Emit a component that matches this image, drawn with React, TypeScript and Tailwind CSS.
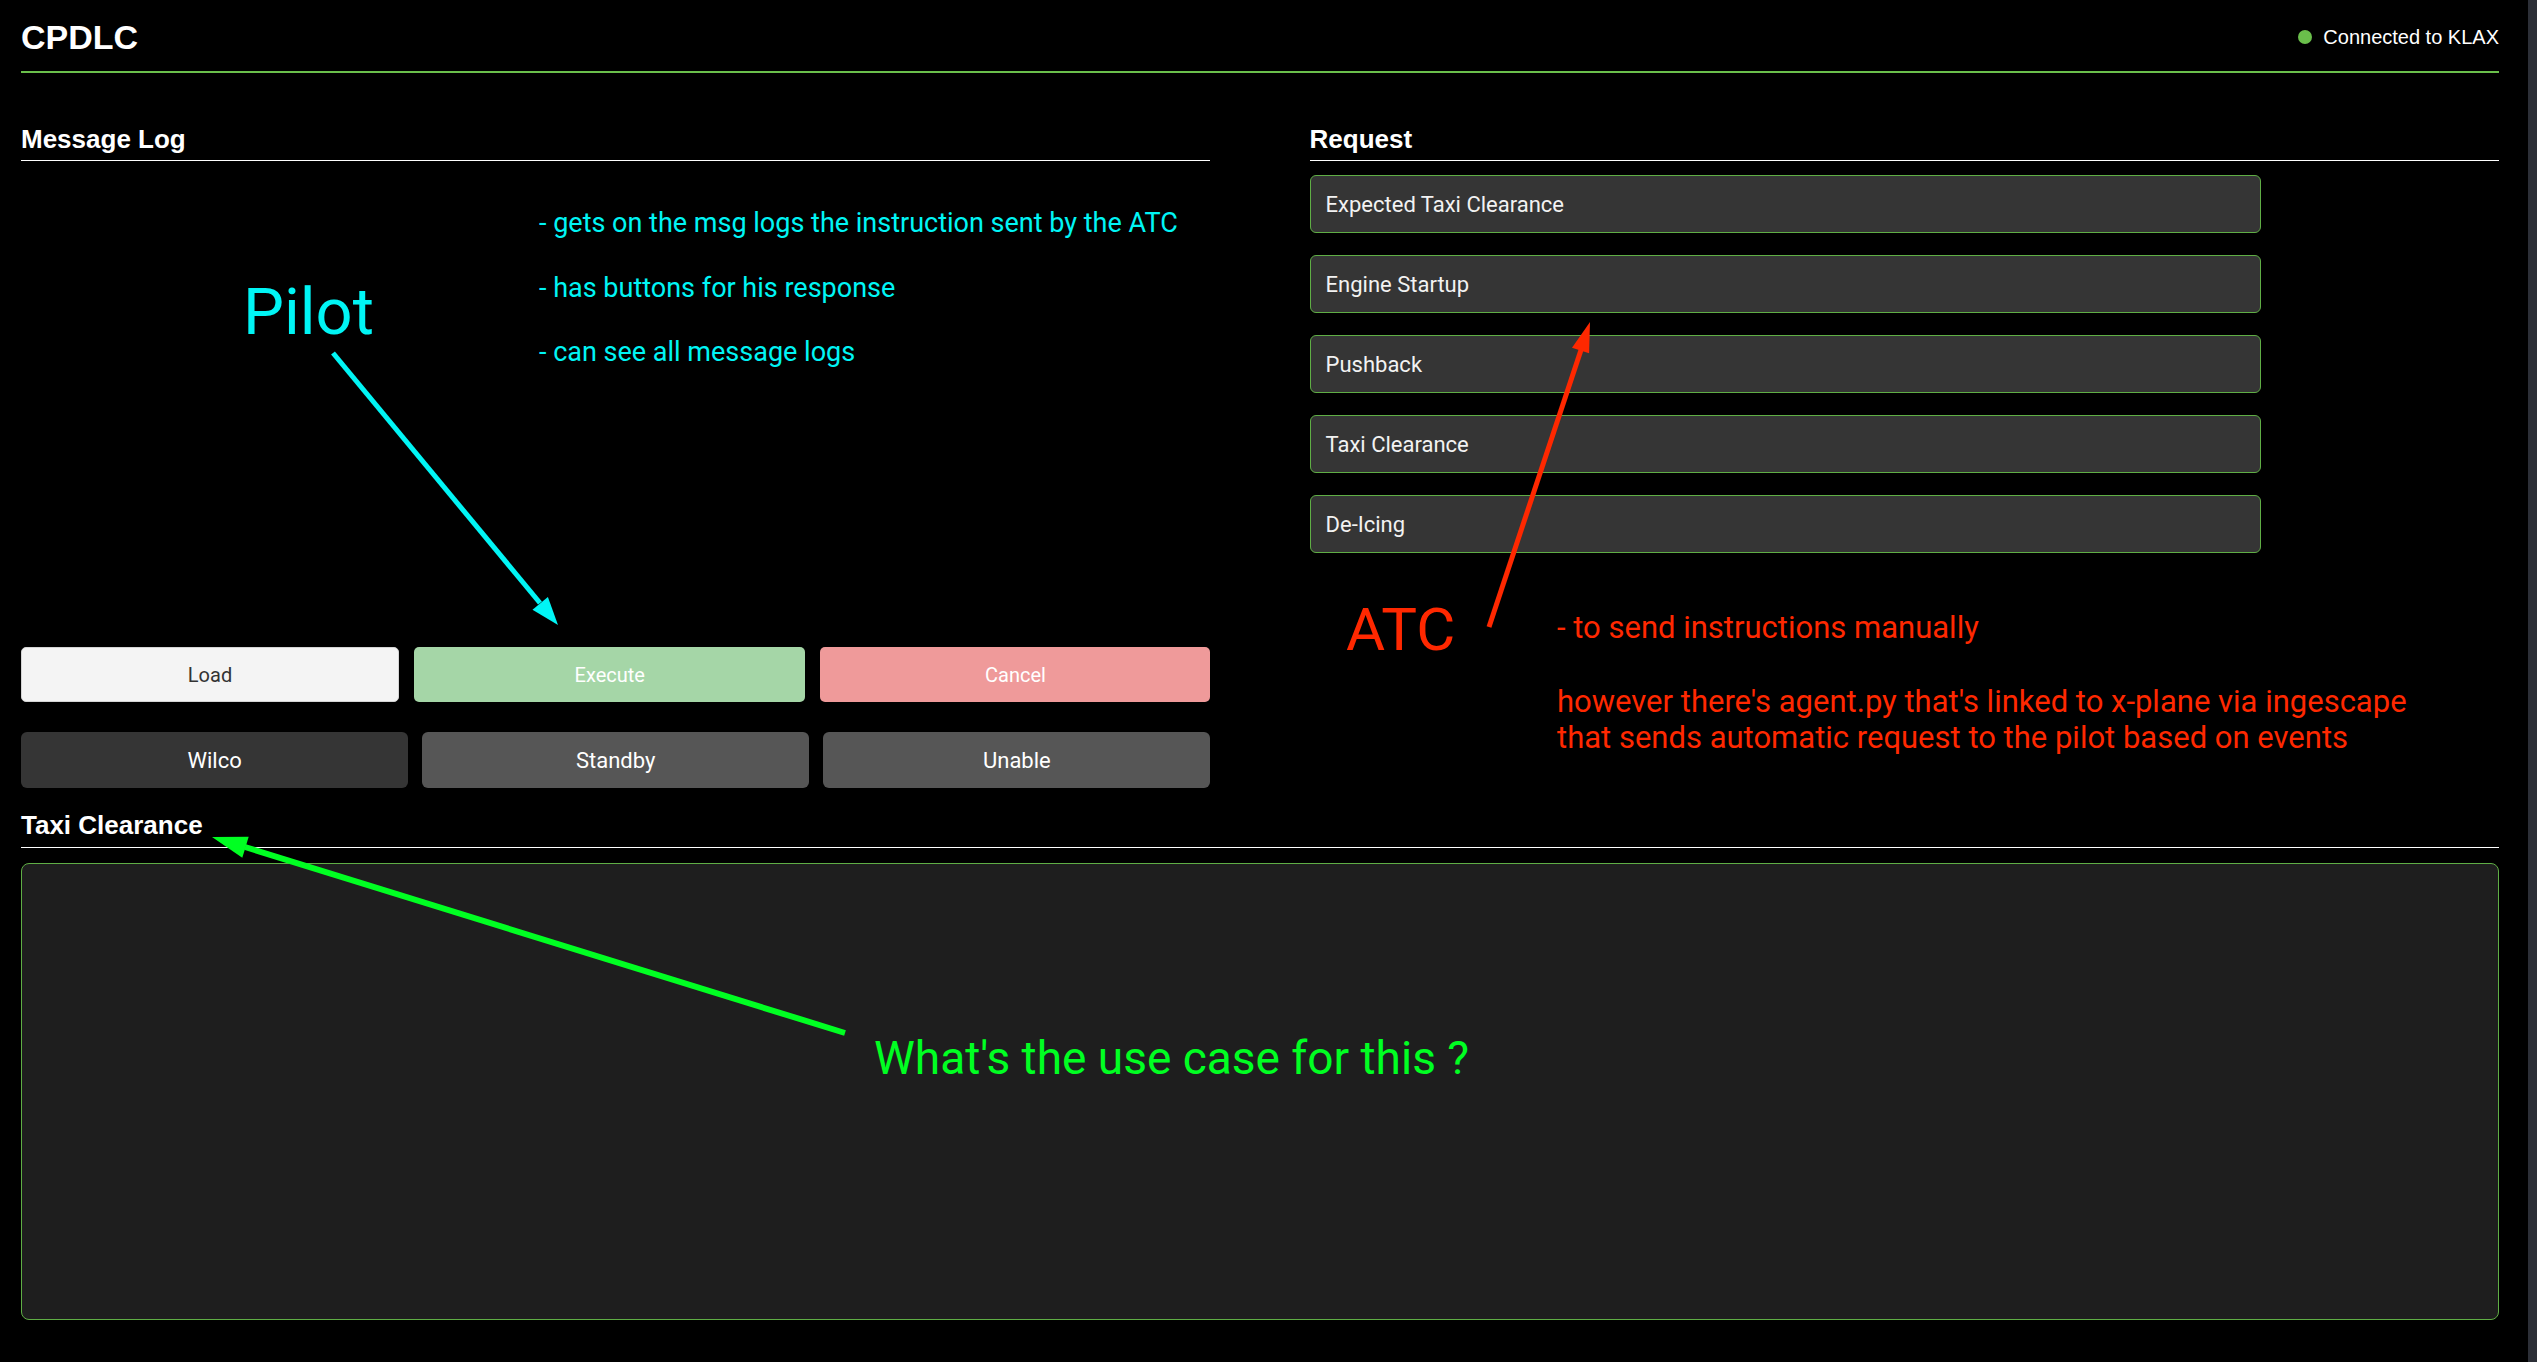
import React from "react";

const requests = [
  "Expected Taxi Clearance",
  "Engine Startup",
  "Pushback",
  "Taxi Clearance",
  "De-Icing",
];

function Annotations() {
  return (
    <div className="pointer-events-none absolute inset-0 font-['Roboto',sans-serif]">
      <svg
        className="absolute left-0 top-0"
        width="2537"
        height="1362"
        viewBox="0 0 2537 1362"
      >
        {/* cyan arrow */}
        <line x1="333" y1="353" x2="540" y2="603" stroke="#00f5f5" strokeWidth="5" />
        <polygon points="558,625 532.5,609.8 547.9,597" fill="#00f5f5" />
        {/* red arrow */}
        <line x1="1489" y1="627" x2="1581" y2="350" stroke="#ff2800" strokeWidth="5" />
        <polygon points="1590,322 1589.1,353.3 1572,347.7" fill="#ff2800" />
        {/* green arrow */}
        <line x1="845" y1="1033" x2="245" y2="847" stroke="#00ff22" strokeWidth="6" />
        <polygon points="212,837 248.7,836.8 242.3,857.8" fill="#00ff22" />
      </svg>

      <div className="absolute left-[243px] top-[280px] text-[65px] leading-none text-[#00f5f5]">
        Pilot
      </div>
      <div className="absolute left-[539px] top-[191px] text-[27px] leading-[64.5px] text-[#00f5f5] whitespace-nowrap">
        <div>- gets on the msg logs the instruction sent by the ATC</div>
        <div>- has buttons for his response</div>
        <div>- can see all message logs</div>
      </div>

      <div className="absolute left-[1346px] top-[600px] text-[60px] leading-none text-[#ff2800]">
        ATC
      </div>
      <div className="absolute left-[1557px] top-[612px] text-[31px] leading-none text-[#ff2800] whitespace-nowrap">
        - to send instructions manually
      </div>
      <div className="absolute left-[1557px] top-[684px] text-[31px] leading-[36px] text-[#ff2800] whitespace-nowrap">
        <div>however there's agent.py that's linked to x-plane via ingescape</div>
        <div>that sends automatic request to the pilot based on events</div>
      </div>

      <div className="absolute left-[874px] top-[1035px] text-[46px] leading-none text-[#00ff22] whitespace-nowrap">
        What's the use case for this ?
      </div>
    </div>
  );
}

export default function App() {
  return (
    <div className="relative flex h-[1362px] w-full overflow-hidden bg-black font-['Liberation_Sans',Arial,sans-serif] text-white">
      <div className="flex min-w-0 flex-1 flex-col pb-[42px] pl-[21px] pr-[29px]">
        <header className="flex h-[73px] shrink-0 items-center justify-between border-b-2 border-[#6abf4b] pt-[3px]">
          <h1 className="text-[34px] font-bold leading-none">CPDLC</h1>
          <div className="flex items-center gap-[11px]">
            <span className="h-[14px] w-[14px] rounded-full bg-[#6abf4b]" />
            <span className="text-[20px] leading-none">Connected to KLAX</span>
          </div>
        </header>

        <div className="mt-[53px] flex shrink-0 justify-between">
          <section className="flex w-[48%] flex-col">
            <h2 className="border-b border-white pb-[8px] text-[26px] font-bold leading-none">
              Message Log
            </h2>
            <div className="h-[486px]" />
            <div className="flex h-[55px] justify-between font-['Roboto',sans-serif] text-[20px]">
              <button className="w-[378px] rounded-[5px] border border-[#d4d4d4] bg-[#f4f4f4] text-[#333333]">
                Load
              </button>
              <button className="w-[391px] rounded-[5px] bg-[#a5d6a7] text-white">
                Execute
              </button>
              <button className="w-[390px] rounded-[5px] bg-[#ef9a9a] text-white">
                Cancel
              </button>
            </div>
            <div className="mt-[30px] flex h-[56px] gap-[14px] font-['Roboto',sans-serif] text-[22px]">
              <button className="flex-1 rounded-[6px] bg-[#353535] text-white">Wilco</button>
              <button className="flex-1 rounded-[6px] bg-[#565656] text-white">Standby</button>
              <button className="flex-1 rounded-[6px] bg-[#565656] text-white">Unable</button>
            </div>
          </section>

          <section className="flex w-[48%] flex-col">
            <h2 className="border-b border-white pb-[8px] text-[26px] font-bold leading-none">
              Request
            </h2>
            <div className="mt-[14px] flex flex-col gap-[22px]">
              {requests.map((r) => (
                <button
                  key={r}
                  className="h-[58px] w-[80%] rounded-[6px] border border-[#5fae45] bg-[#353535] pl-[15px] text-left font-['Roboto',sans-serif] text-[22px] text-[#f2f2f2]"
                >
                  {r}
                </button>
              ))}
            </div>
          </section>
        </div>

        <h2 className="mt-[24px] shrink-0 border-b border-white pb-[9px] text-[26px] font-bold leading-none">
          Taxi Clearance
        </h2>
        <div className="mt-[15px] flex-1 rounded-[8px] border border-[#5fae45] bg-[#1e1e1e]" />
      </div>
      <div className="w-[9px] shrink-0 bg-[#2c2f37]" />

      <Annotations />
    </div>
  );
}
